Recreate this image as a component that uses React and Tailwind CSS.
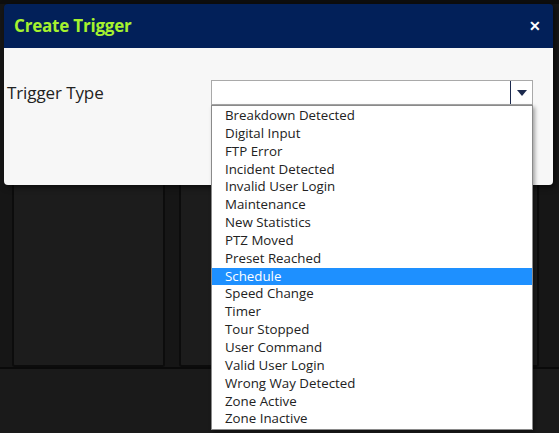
import React from 'react';

const triggerTypes = [
  'Breakdown Detected',
  'Digital Input',
  'FTP Error',
  'Incident Detected',
  'Invalid User Login',
  'Maintenance',
  'New Statistics',
  'PTZ Moved',
  'Preset Reached',
  'Schedule',
  'Speed Change',
  'Timer',
  'Tour Stopped',
  'User Command',
  'Valid User Login',
  'Wrong Way Detected',
  'Zone Active',
  'Zone Inactive',
];

const font = { fontFamily: '"Open Sans", "Noto Sans", sans-serif' };

const Background = () => (
  <div className="flex flex-col h-full">
    <div className="h-[4px] bg-[#0e0e0e]" />
    <div className="flex gap-[14px] pl-[12px] h-[365px] border-b-2 border-[#0a0a0a]">
      <div className="w-[153px] h-full bg-[#1c1c1c] border-x-2 border-b-2 border-[#0c0c0c] rounded-b-[3px]" />
      <div className="w-[360px] h-full bg-[#1c1c1c] border-x-2 border-b-2 border-[#0c0c0c] rounded-b-[3px]" />
    </div>
    <div className="flex-1 bg-[#1a1a1a]" />
  </div>
);

const Modal = ({ selected }) => (
  <div
    className="absolute left-[4px] top-[4px] w-[549px] rounded-[4px] shadow-[2px_2px_6px_rgba(0,0,0,0.6)]"
    style={font}
  >
    <div className="h-[44px] bg-[#022059] rounded-t-[4px] flex items-center justify-between pl-[10px] pr-[12px]">
      <span className="text-[#a6f22e] text-[17px] font-bold tracking-[-0.2px]">Create Trigger</span>
      <span className="text-white text-[14px] font-bold leading-none">✕</span>
    </div>
    <div className="h-[137px] bg-[#f7f7f7] rounded-b-[4px] relative">
      <div className="flex items-center pt-[32px]">
        <label className="w-[207px] pl-[3px] text-[17px] text-[#222] leading-[25px] tracking-[-0.1px]">Trigger Type</label>
        <div className="w-[322px] h-[25px] bg-white border border-[#a9a9a9] flex">
          <div className="flex-1" />
          <div className="w-[22px] border-l border-[#1c2a4e] flex items-center justify-center">
            <svg width="10" height="6" viewBox="0 0 10 6">
              <path d="M0 0h10L5 6z" fill="#1c2a4e" />
            </svg>
          </div>
        </div>
      </div>
    </div>
    <ul className="absolute left-[207px] top-[101px] w-[322px] bg-white border border-[#8a8a8a] shadow-[2px_2px_4px_rgba(0,0,0,0.35)] py-[1px]">
      {triggerTypes.map((t) => (
        <li
          key={t}
          className={`h-[17.85px] leading-[17.85px] pl-[13px] text-[13.3px] ${
            t === selected ? 'bg-[#1e90ff] text-white' : 'text-[#222]'
          }`}
        >
          {t}
        </li>
      ))}
    </ul>
  </div>
);

export default function App() {
  return (
    <div className="relative w-[559px] h-[433px] overflow-hidden bg-[#161616]">
      <Background />
      <Modal selected="Schedule" />
    </div>
  );
}
